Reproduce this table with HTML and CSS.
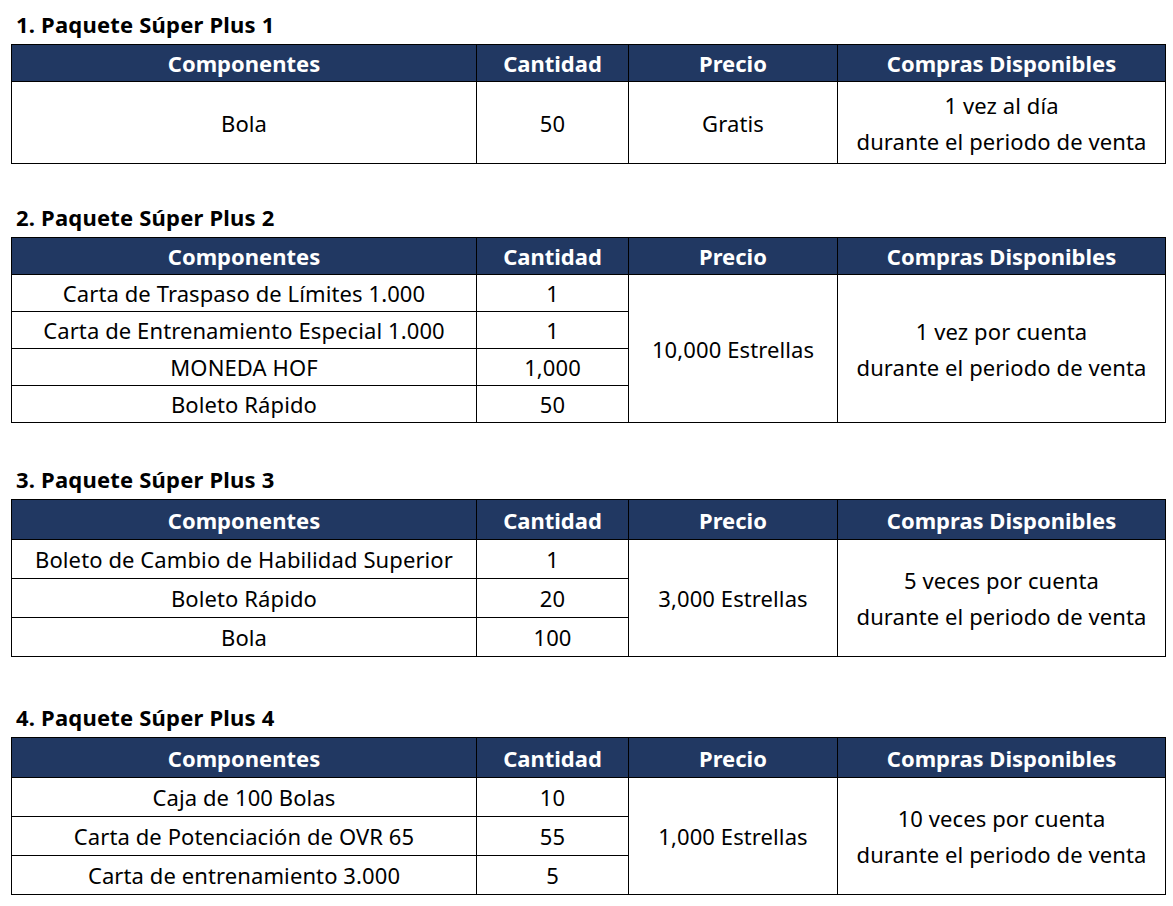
FILE: index.html
```html
<!DOCTYPE html>
<html lang="es">
<head>
<meta charset="utf-8">
<title>Paquetes Súper Plus</title>
<link rel="stylesheet" href="styles.css">
</head>
<body>
<main class="page">

  <section class="pkg pkg-first">
    <h2 class="pkg-title">1. Paquete Súper Plus 1</h2>
    <table class="pkg-table pkg-compact">
      <colgroup><col class="c-comp"><col class="c-qty"><col class="c-price"><col class="c-buy"></colgroup>
      <thead>
        <tr><th>Componentes</th><th>Cantidad</th><th>Precio</th><th>Compras Disponibles</th></tr>
      </thead>
      <tbody>
        <tr class="row-double">
          <td>Bola</td><td>50</td><td>Gratis</td>
          <td class="multi">1 vez al día<br>durante el periodo de venta</td>
        </tr>
      </tbody>
    </table>
  </section>

  <section class="pkg pkg-tight">
    <h2 class="pkg-title">2. Paquete Súper Plus 2</h2>
    <table class="pkg-table pkg-compact">
      <colgroup><col class="c-comp"><col class="c-qty"><col class="c-price"><col class="c-buy"></colgroup>
      <thead>
        <tr><th>Componentes</th><th>Cantidad</th><th>Precio</th><th>Compras Disponibles</th></tr>
      </thead>
      <tbody>
        <tr>
          <td>Carta de Traspaso de Límites 1.000</td><td>1</td>
          <td rowspan="4">10,000 Estrellas</td>
          <td rowspan="4" class="multi">1 vez por cuenta<br>durante el periodo de venta</td>
        </tr>
        <tr><td>Carta de Entrenamiento Especial 1.000</td><td>1</td></tr>
        <tr><td>MONEDA HOF</td><td>1,000</td></tr>
        <tr><td>Boleto Rápido</td><td>50</td></tr>
      </tbody>
    </table>
  </section>

  <section class="pkg">
    <h2 class="pkg-title">3. Paquete Súper Plus 3</h2>
    <table class="pkg-table pkg-roomy">
      <colgroup><col class="c-comp"><col class="c-qty"><col class="c-price"><col class="c-buy"></colgroup>
      <thead>
        <tr><th>Componentes</th><th>Cantidad</th><th>Precio</th><th>Compras Disponibles</th></tr>
      </thead>
      <tbody>
        <tr>
          <td>Boleto de Cambio de Habilidad Superior</td><td>1</td>
          <td rowspan="3">3,000 Estrellas</td>
          <td rowspan="3" class="multi">5 veces por cuenta<br>durante el periodo de venta</td>
        </tr>
        <tr><td>Boleto Rápido</td><td>20</td></tr>
        <tr><td>Bola</td><td>100</td></tr>
      </tbody>
    </table>
  </section>

  <section class="pkg pkg-loose">
    <h2 class="pkg-title">4. Paquete Súper Plus 4</h2>
    <table class="pkg-table pkg-roomy">
      <colgroup><col class="c-comp"><col class="c-qty"><col class="c-price"><col class="c-buy"></colgroup>
      <thead>
        <tr><th>Componentes</th><th>Cantidad</th><th>Precio</th><th>Compras Disponibles</th></tr>
      </thead>
      <tbody>
        <tr>
          <td>Caja de 100 Bolas</td><td>10</td>
          <td rowspan="3">1,000 Estrellas</td>
          <td rowspan="3" class="multi">10 veces por cuenta<br>durante el periodo de venta</td>
        </tr>
        <tr><td>Carta de Potenciación de OVR 65</td><td>55</td></tr>
        <tr><td>Carta de entrenamiento 3.000</td><td>5</td></tr>
      </tbody>
    </table>
  </section>

</main>
</body>
</html>
```
FILE: styles.css
```css
html, body {
  margin: 0;
  padding: 0;
  background: #ffffff;
}

body {
  font-family: "Noto Sans", "Noto Sans CJK KR", sans-serif;
  color: #000000;
}

.page {
  padding: 11px 9px 0 11px;
}

.pkg {
  margin-top: 43px;
}

.pkg-first {
  margin-top: 0;
}

.pkg-tight {
  margin-top: 40px;
}

.pkg-loose {
  margin-top: 47px;
}

.pkg-title {
  margin: 0 0 7px 5px;
  font-size: 22px;
  font-weight: 700;
  line-height: 26px;
  height: 26px;
  letter-spacing: 0.2px;
}

.pkg-table {
  width: 1154px;
  border-collapse: collapse;
  table-layout: fixed;
}

.c-comp { width: 465px; }
.c-qty { width: 152px; }
.c-price { width: 209px; }
.c-buy { width: 328px; }

.pkg-table th,
.pkg-table td {
  border: 1px solid #000000;
  padding: 0;
  text-align: center;
  vertical-align: middle;
  overflow: hidden;
  white-space: nowrap;
}

.pkg-table th {
  background: #213862;
  color: #ffffff;
  font-size: 22px;
  font-weight: 700;
  line-height: 26px;
}

.pkg-table td {
  font-size: 22px;
  font-weight: 400;
  letter-spacing: 0.1px;
  line-height: 26px;
}

.pkg-table td.multi {
  line-height: 36px;
}

.pkg-compact th { height: 36px; }
.pkg-compact td { height: 36px; }
.pkg-compact .row-double td { height: 81px; }

.pkg-roomy th { height: 39px; }
.pkg-roomy td { height: 38px; }
```
